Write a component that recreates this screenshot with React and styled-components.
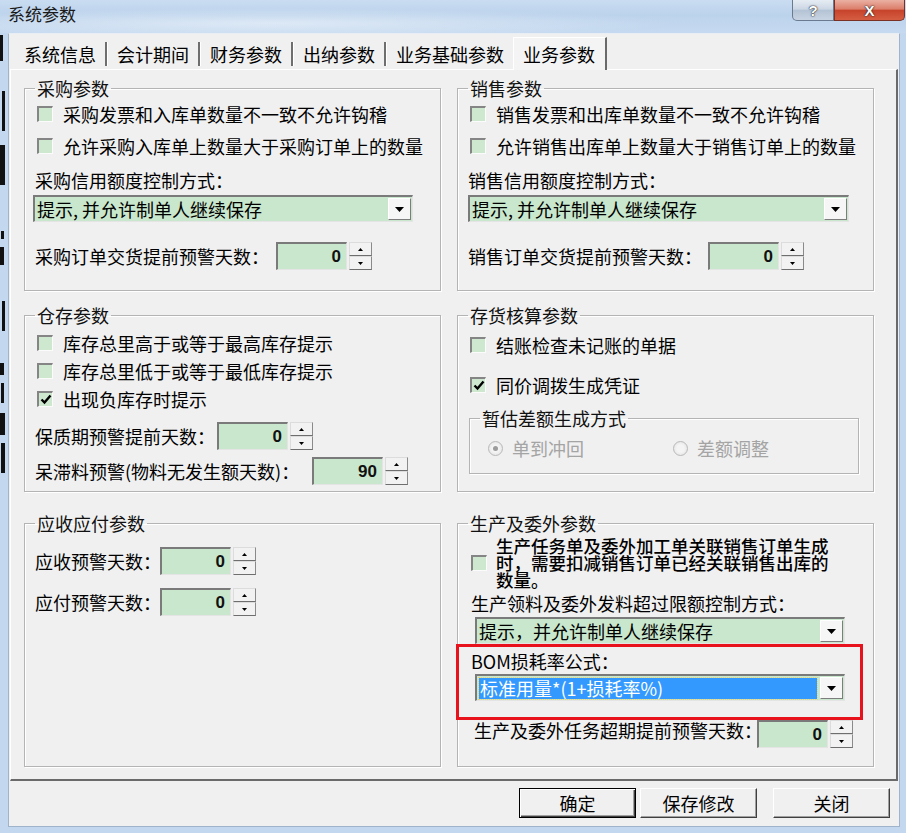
import styled, { createGlobalStyle } from 'styled-components'

const GlobalStyle = createGlobalStyle`
  html, body { margin: 0; padding: 0; background: #fff; }
  body { font-family: "Noto Sans CJK SC", "Noto Sans", sans-serif; color: #000; }
  *, *::before, *::after { box-sizing: border-box; }
`

const Window = styled.div`
  width: 906px;
  height: 833px;
  display: flex;
  flex-direction: column;
  background: #c3d8ee;
  overflow: hidden;
`

const TitleBar = styled.div`
  height: 33px;
  flex: none;
  display: flex;
  align-items: flex-start;
  background: radial-gradient(ellipse at 30% 70%, rgba(255, 255, 255, 0.45), transparent 45%),
    linear-gradient(180deg, #c9dcf1 0%, #bcd3ec 45%, #c6daf0 100%);
`

const Title = styled.div`
  flex: 1;
  font-size: 17px;
  line-height: 28px;
  padding-left: 8px;
  color: #1a1a1a;
`

const CaptionBtn = styled.div`
  width: ${p => p.$w}px;
  height: 21px;
  display: flex;
  align-items: center;
  justify-content: center;
  border: 1px solid ${p => (p.$close ? '#7b3026' : '#6a7a90')};
  border-top: none;
  border-radius: ${p => (p.$close ? '0 0 5px 0' : '0 0 0 5px')};
  background: ${p =>
    p.$close
      ? 'linear-gradient(180deg,#eab0a3 0%,#dc7f6b 45%,#c7432b 52%,#d55e42 100%)'
      : 'linear-gradient(180deg,#e6ecf3 0%,#ccd7e4 45%,#b4c3d5 52%,#c8d4e2 100%)'};
  color: #fff;
  font: bold 15px "Liberation Sans", sans-serif;
  text-shadow: 0 0 2px #2a2a2a, 0 0 1px #000;
`

const Middle = styled.div`
  flex: 1;
  display: flex;
  min-height: 0;
`

const SideFrame = styled.div`
  width: ${p => p.$w}px;
  flex: none;
  overflow: hidden;
`

const BottomFrame = styled.div`
  height: 6px;
  flex: none;
`

const Client = styled.div`
  flex: 1;
  display: flex;
  flex-direction: column;
  background: #f0f0f0;
  border: 1px solid #9fb3ca;
  border-top-color: #e9eef4;
`

const TabStrip = styled.div`
  height: 35px;
  flex: none;
  display: flex;
  align-items: flex-end;
  padding-left: 6px;
`

const Tab = styled.div`
  height: ${p => (p.$active ? 33 : 30)}px;
  display: flex;
  align-items: center;
  padding: 0 ${p => (p.$active ? 10 : 9)}px 0 9px;
  font-size: 18px;
  line-height: 22px;
  white-space: nowrap;
  ${p =>
    p.$active &&
    `
    background: #f4f4f4;
    border-top: 1px solid #fff;
    border-left: 1px solid #fff;
    border-right: 2px solid #6a6a6a;
    margin-bottom: -1px;
    position: relative;
    z-index: 1;
  `}
`

const TabSep = styled.div`
  width: 3px;
  height: 24px;
  margin-bottom: 3px;
  border-left: 2px solid #6e6e6e;
  border-right: 1px solid #fff;
`

const Pane = styled.div`
  height: 712px;
  flex: none;
  margin: 0 1px 0 1px;
  border-top: 1px solid #fff;
  border-left: 1px solid #fff;
  border-right: 2px solid #6a6a6a;
  border-bottom: 2px solid #6a6a6a;
  padding: 8px 0 0 13px;
  display: grid;
  grid-template-columns: 417px 417px;
  column-gap: 16px;
  align-content: start;
`

const Group = styled.fieldset`
  margin: ${p => p.$mt || 0}px 0 0 ${p => p.$ml || 0}px;
  padding: 0 10px;
  height: ${p => p.$h}px;
  width: ${p => (p.$w ? `${p.$w}px` : 'auto')};
  min-width: 0;
  border: 1px solid #b4b4b4;
  box-shadow: inset 1px 1px 0 #fff, 1px 1px 0 #fff;
  display: flex;
  flex-direction: column;
  align-items: flex-start;
`

const Legend = styled.legend`
  font-size: 18px;
  line-height: 20px;
  padding: 0 2px;
  color: #111;
`

const CheckRow = styled.label`
  display: flex;
  align-items: center;
  gap: ${p => p.$gap || 10}px;
  height: ${p => (p.$h ? `${p.$h}px` : 'auto')};
  margin-top: ${p => p.$mt || 0}px;
  padding-left: ${p => p.$pl || 2}px;
  font-size: 18px;
  line-height: 22px;
  white-space: nowrap;
`

const Box = styled.span`
  width: 16px;
  height: 16px;
  flex: none;
  display: flex;
  align-items: center;
  justify-content: center;
  background: #cde8cf;
  border-top: 2px solid #858585;
  border-left: 2px solid #858585;
  border-right: 1px solid #fbfbfb;
  border-bottom: 1px solid #fbfbfb;
`

const MultiText = styled.span`
  font-size: 17.5px;
  line-height: 17px;
  white-space: normal;
  width: 340px;
  font-weight: 500;
`

const FieldLabel = styled.div`
  font-size: 18px;
  line-height: 22px;
  margin: ${p => p.$mt || 0}px 0 0 ${p => p.$ml || 0}px;
  white-space: nowrap;
`

const Combo = styled.div`
  display: flex;
  width: ${p => p.$w}px;
  height: 27px;
  margin: ${p => p.$mt || 0}px 0 0 ${p => p.$ml || 0}px;
  background: #c9e7cc;
  border-top: 2px solid #7a7a7a;
  border-left: 2px solid #7a7a7a;
  border-right: 1px solid #e4e4e4;
  border-bottom: 1px solid #e4e4e4;
`

const ComboText = styled.div`
  flex: 1;
  display: flex;
  align-items: center;
  font-size: 18px;
  line-height: 22px;
  padding-left: 2px;
  white-space: nowrap;
`

const Selected = styled.div`
  flex: 1;
  margin-right: 2px;
  line-height: 21px;
  background: #3399ff;
  color: #fff;
  outline: 1px dotted #e8d27a;
  padding-left: 1px;
`

const DropBtn = styled.div`
  width: 23px;
  margin: 1px;
  flex: none;
  display: flex;
  align-items: center;
  justify-content: center;
  background: #f6f6f6;
  border: 1px solid;
  border-color: #fff #7d7d7d #7d7d7d #fff;
`

const SpinRow = styled.div`
  display: flex;
  align-items: ${p => (p.$top ? 'flex-start' : 'center')};
  margin: ${p => p.$mt || 0}px 0 0 ${p => p.$ml || 0}px;
  white-space: nowrap;
`

const SpinLabel = styled.span`
  width: ${p => p.$w}px;
  flex: none;
  font-size: 18px;
  line-height: ${p => (p.$top ? 20 : 22)}px;
`

const SpinBox = styled.div`
  width: 71px;
  height: 28px;
  background: #c9e7cc;
  border-top: 2px solid #7a7a7a;
  border-left: 2px solid #7a7a7a;
  border-right: 1px solid #e4e4e4;
  border-bottom: 1px solid #e4e4e4;
  text-align: right;
  padding-right: 5px;
  font: bold 17px/25px "Liberation Sans", sans-serif;
  color: #111;
`

const Spinner = styled.div`
  width: 23px;
  height: 28px;
  margin-left: 2px;
  display: flex;
  flex-direction: column;
`

const SpinBtn = styled.div`
  flex: 1;
  display: flex;
  align-items: center;
  justify-content: center;
  background: #f2f2f2;
  border: 1px solid;
  border-color: #dcdcdc #8a8a8a #6e6e6e #dcdcdc;
`

const Highlight = styled.div`
  width: 407px;
  height: 76px;
  margin: 0 0 0 -12px;
  padding: 3px 0 0 12px;
  border: 3px solid #e8121c;
  position: relative;
  z-index: 1;
`

const RadioRow = styled.div`
  height: 40px;
  display: flex;
  align-items: center;
  padding-left: 8px;
`

const RadioItem = styled.div`
  width: ${p => p.$w}px;
  display: flex;
  align-items: center;
  gap: 9px;
  font-size: 18px;
  line-height: 22px;
  color: #a4a4a4;
`

const Radio = styled.span`
  width: 15px;
  height: 15px;
  border-radius: 50%;
  border: 1px solid #b9b9b9;
  background: radial-gradient(circle, #f4f4f4 40%, #dedede 100%);
  display: flex;
  align-items: center;
  justify-content: center;
  &::after {
    content: '';
    width: 5px;
    height: 5px;
    border-radius: 50%;
    background: ${p => (p.$on ? '#9c9c9c' : 'transparent')};
  }
`

const ButtonBar = styled.div`
  flex: 1;
  display: flex;
  justify-content: flex-end;
  align-items: flex-start;
  padding: 7px 9px 0 0;
`

const Button = styled.div`
  width: 117px;
  height: 30px;
  margin-left: ${p => p.$ml || 0}px;
  display: flex;
  align-items: center;
  justify-content: center;
  font-size: 18px;
  background: #f0f0f0;
  border: 1px solid;
  border-color: ${p => (p.$default ? '#000' : '#fff #404040 #404040 #fff')};
  box-shadow: ${p =>
    p.$default
      ? 'inset 1px 1px 0 #fff, inset -1px -1px 0 #404040, inset -2px -2px 0 #a0a0a0'
      : 'inset -1px -1px 0 #a0a0a0'};
`

const Arrow = ({ up, w = 9, h = 5 }) => (
  <svg width={w} height={h} viewBox={`0 0 ${w} ${h}`}>
    <polygon points={up ? `0,${h} ${w},${h} ${w / 2},0` : `0,0 ${w},0 ${w / 2},${h}`} fill="#000" />
  </svg>
)

const Check = () => (
  <svg width="12" height="11" viewBox="0 0 12 11">
    <path d="M1.5 5.5 L4.5 8.5 L10.5 1.5" fill="none" stroke="#000" strokeWidth="2.4" />
  </svg>
)

const CheckBox = ({ checked, children, ...rest }) => (
  <CheckRow {...rest}>
    <Box>{checked && <Check />}</Box>
    {children}
  </CheckRow>
)

const Spin = ({ label, value = 0, w, ...rest }) => (
  <SpinRow {...rest}>
    <SpinLabel $w={w} $top={rest.$top}>{label}</SpinLabel>
    <SpinBox>{value}</SpinBox>
    <Spinner>
      <SpinBtn><Arrow up w={5} h={3} /></SpinBtn>
      <SpinBtn><Arrow w={5} h={3} /></SpinBtn>
    </Spinner>
  </SpinRow>
)

const Select = ({ text, selected, ...rest }) => (
  <Combo {...rest}>
    <ComboText>{selected ? <Selected>{text}</Selected> : text}</ComboText>
    <DropBtn><Arrow /></DropBtn>
  </Combo>
)

const GlassShadows = () => (
  <svg width="8" height="794" viewBox="0 0 8 794">
    <g fill="#111">
      <rect x="0" y="2" width="3" height="26" />
      <rect x="2" y="58" width="3" height="40" />
      <rect x="0" y="112" width="5" height="40" />
      <rect x="1" y="198" width="3" height="8" />
      <rect x="0" y="214" width="4" height="18" />
      <rect x="2" y="268" width="3" height="30" />
      <rect x="0" y="330" width="4" height="12" />
      <rect x="1" y="350" width="3" height="20" />
      <rect x="0" y="380" width="5" height="22" />
      <rect x="1" y="410" width="4" height="30" />
    </g>
  </svg>
)

const tabs = ['系统信息', '会计期间', '财务参数', '出纳参数', '业务基础参数']

export default function App() {
  return (
    <>
      <GlobalStyle />
      <Window>
        <TitleBar>
          <Title>系统参数</Title>
          <CaptionBtn $w={42}>?</CaptionBtn>
          <CaptionBtn $w={71} $close>X</CaptionBtn>
          <div style={{ width: 1 }} />
        </TitleBar>
        <Middle>
          <SideFrame $w={8}><GlassShadows /></SideFrame>
          <Client>
            <TabStrip>
              {tabs.map((t, i) => (
                <span key={t} style={{ display: 'contents' }}>
                  <Tab>{t}</Tab>
                  {i < tabs.length - 1 && <TabSep />}
                </span>
              ))}
              <Tab $active>业务参数</Tab>
            </TabStrip>
            <Pane>
              <Group $h={213}>
                <Legend>采购参数</Legend>
                <CheckBox $h={32}>采购发票和入库单数量不一致不允许钩稽</CheckBox>
                <CheckBox $h={32}>允许采购入库单上数量大于采购订单上的数量</CheckBox>
                <FieldLabel $mt={7}>采购信用额度控制方式：</FieldLabel>
                <Select $mt={4} $ml={-2} $w={380} text="提示, 并允许制单人继续保存" />
                <Spin $mt={20} w={241} label="采购订单交货提前预警天数：" />
              </Group>
              <Group $h={213}>
                <Legend>销售参数</Legend>
                <CheckBox $h={32}>销售发票和出库单数量不一致不允许钩稽</CheckBox>
                <CheckBox $h={32}>允许销售出库单上数量大于销售订单上的数量</CheckBox>
                <FieldLabel $mt={7}>销售信用额度控制方式：</FieldLabel>
                <Select $mt={4} $w={381} text="提示, 并允许制单人继续保存" />
                <Spin $mt={20} w={240} label="销售订单交货提前预警天数：" />
              </Group>

              <Group $h={187} $mt={14}>
                <Legend>仓存参数</Legend>
                <CheckBox $h={28} $mt={4}>库存总里高于或等于最高库存提示</CheckBox>
                <CheckBox $h={28}>库存总里低于或等于最低库存提示</CheckBox>
                <CheckBox $h={28} checked>出现负库存时提示</CheckBox>
                <Spin $mt={9} w={182} label="保质期预警提前天数：" />
                <Spin $mt={7} w={277} value={90} label="呆滞料预警(物料无发生额天数)：" />
              </Group>
              <Group $h={187} $mt={14}>
                <Legend>存货核算参数</Legend>
                <CheckBox $h={40}>结账检查未记账的单据</CheckBox>
                <CheckBox $h={40} checked>同价调拨生成凭证</CheckBox>
                <Group $h={66} $w={390} $mt={3} $ml={1}>
                  <Legend>暂估差额生成方式</Legend>
                  <RadioRow>
                    <RadioItem $w={185}><Radio $on />单到冲回</RadioItem>
                    <RadioItem $w={120}><Radio />差额调整</RadioItem>
                  </RadioRow>
                </Group>
              </Group>

              <Group $h={254} $mt={21}>
                <Legend>应收应付参数</Legend>
                <Spin $mt={14} w={125} label="应收预警天数：" />
                <Spin $mt={13} w={125} label="应付预警天数：" />
              </Group>
              <Group $h={254} $mt={21}>
                <Legend>生产及委外参数</Legend>
                <CheckBox $mt={4} $pl={3} $gap={9}>
                  <MultiText>生产任务单及委外加工单关联销售订单生成时，需要扣减销售订单已经关联销售出库的数量。</MultiText>
                </CheckBox>
                <FieldLabel $mt={4} $ml={3}>生产领料及委外发料超过限额控制方式：</FieldLabel>
                <Select $mt={3} $ml={7} $w={370} text="提示，并允许制单人继续保存" />
                <Highlight>
                  <FieldLabel>BOM损耗率公式：</FieldLabel>
                  <Select $mt={2} $ml={4} $w={370} selected text="标准用量*(1+损耗率%)" />
                </Highlight>
                <Spin $top $ml={6} w={283} label="生产及委外任务超期提前预警天数：" />
              </Group>
            </Pane>
            <ButtonBar>
              <Button $default>确定</Button>
              <Button $ml={4}>保存修改</Button>
              <Button $ml={16}>关闭</Button>
            </ButtonBar>
          </Client>
          <SideFrame $w={6} />
        </Middle>
        <BottomFrame />
      </Window>
    </>
  )
}
